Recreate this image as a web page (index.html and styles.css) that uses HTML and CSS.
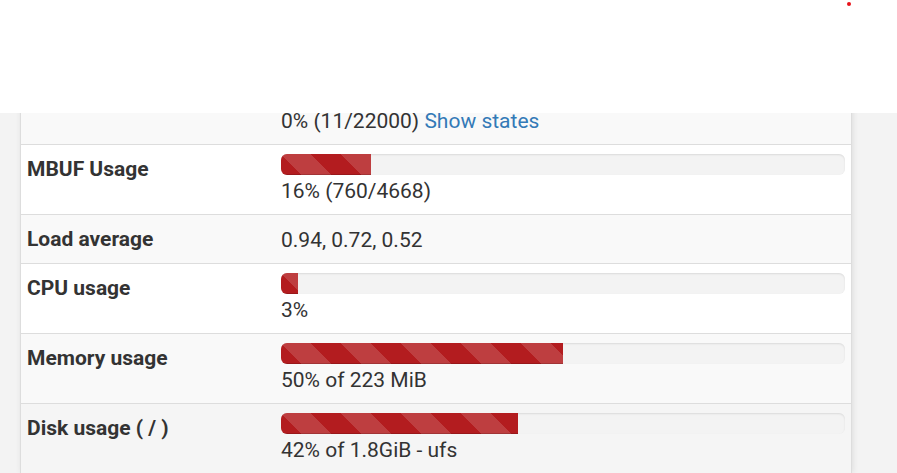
FILE: index.html
```html
<!DOCTYPE html>
<html lang="en">
<head>
<meta charset="utf-8">
<title>System Information</title>
<link rel="stylesheet" href="styles.css">
</head>
<body>
<header class="topbar">
  <span class="alert-dot"></span>
</header>
<main class="content">
  <section class="panel">
    <table class="info-table">
      <colgroup>
        <col class="col-label">
        <col>
      </colgroup>
      <tbody>
        <tr class="striped">
          <th>State table size</th>
          <td>
            <div class="progress"><div class="bar" style="width:0%"></div></div>
            <div class="line">0% (11/22000) <a href="#">Show states</a></div>
          </td>
        </tr>
        <tr>
          <th>MBUF Usage</th>
          <td>
            <div class="progress"><div class="bar" style="width:16%"></div></div>
            <div class="line">16% (760/4668)</div>
          </td>
        </tr>
        <tr class="striped">
          <th>Load average</th>
          <td><div class="line">0.94, 0.72, 0.52</div></td>
        </tr>
        <tr>
          <th>CPU usage</th>
          <td>
            <div class="progress"><div class="bar" style="width:3%"></div></div>
            <div class="line">3%</div>
          </td>
        </tr>
        <tr class="striped">
          <th>Memory usage</th>
          <td>
            <div class="progress"><div class="bar" style="width:50%"></div></div>
            <div class="line">50% of 223 MiB</div>
          </td>
        </tr>
        <tr class="hover">
          <th>Disk usage ( / )</th>
          <td>
            <div class="progress"><div class="bar" style="width:42%"></div></div>
            <div class="line">42% of 1.8GiB - ufs</div>
          </td>
        </tr>
      </tbody>
    </table>
  </section>
</main>
</body>
</html>
```
FILE: styles.css
```css
html, body {
  margin: 0;
  padding: 0;
}

body {
  background: #f3f3f3;
  font-family: Roboto, "Liberation Sans", Arial, sans-serif;
  font-size: 21px;
  line-height: 30px;
  color: #333;
  height: 473px;
  overflow: hidden;
}

.topbar {
  position: fixed;
  top: 0;
  left: 0;
  right: 0;
  height: 113px;
  background: #fff;
  z-index: 10;
}

.alert-dot {
  position: absolute;
  left: 847px;
  top: 2px;
  width: 4px;
  height: 4px;
  border-radius: 50%;
  background: #e8121a;
}

.content {
  padding-top: 74px;
  padding-left: 20px;
}

.panel {
  width: 830px;
  border-left: 1px solid #ddd;
  border-right: 1px solid #ddd;
  background: #fff;
  box-shadow: 1px 0 6px rgba(0, 0, 0, 0.09);
}

.info-table {
  width: 100%;
  border-collapse: collapse;
  table-layout: fixed;
}

.col-label {
  width: 254px;
}

.info-table th,
.info-table td {
  border-top: 1px solid #ddd;
  padding: 9px 6px;
  vertical-align: top;
  text-align: left;
}

.info-table th {
  font-weight: 700;
  color: #333;
}

.info-table tr.striped {
  background: #f9f9f9;
}

.info-table tr.hover {
  background: #f5f5f5;
}

.line {
  height: 30px;
  line-height: 32px;
}

.line a {
  color: #337ab7;
  text-decoration: none;
}

.progress {
  height: 21px;
  background: #f3f3f3;
  border-radius: 6px;
  box-shadow: inset 0 1px 2px rgba(0, 0, 0, 0.1);
  overflow: hidden;
}

.bar {
  height: 100%;
  background-color: #b31c1f;
  background-image: linear-gradient(45deg,
    rgba(255, 255, 255, 0.15) 25%, transparent 25%,
    transparent 50%, rgba(255, 255, 255, 0.15) 50%,
    rgba(255, 255, 255, 0.15) 75%, transparent 75%, transparent);
  background-size: 60px 60px;
  box-shadow: inset 0 -1px 0 rgba(0, 0, 0, 0.15);
}
```
